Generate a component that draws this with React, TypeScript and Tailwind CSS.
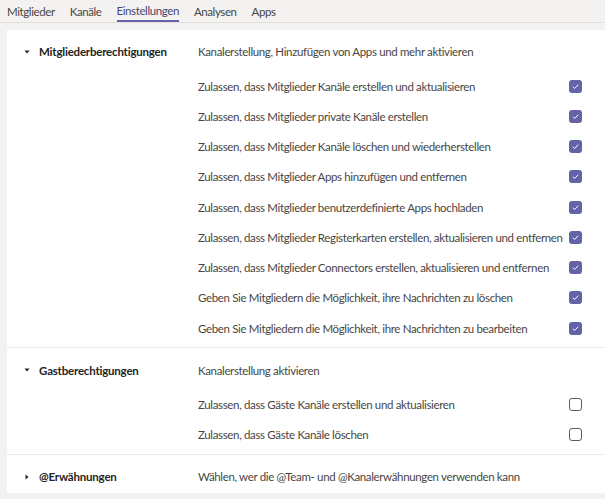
import React from "react";

interface Section {
  title: string;
  desc: string;
  open: boolean;
  rows: { label: string; checked: boolean }[];
}

const sections: Section[] = [
  {
    title: "Mitgliederberechtigungen",
    desc: "Kanalerstellung, Hinzufügen von Apps und mehr aktivieren",
    open: true,
    rows: [
      { label: "Zulassen, dass Mitglieder Kanäle erstellen und aktualisieren", checked: true },
      { label: "Zulassen, dass Mitglieder private Kanäle erstellen", checked: true },
      { label: "Zulassen, dass Mitglieder Kanäle löschen und wiederherstellen", checked: true },
      { label: "Zulassen, dass Mitglieder Apps hinzufügen und entfernen", checked: true },
      { label: "Zulassen, dass Mitglieder benutzerdefinierte Apps hochladen", checked: true },
      { label: "Zulassen, dass Mitglieder Registerkarten erstellen, aktualisieren und entfernen", checked: true },
      { label: "Zulassen, dass Mitglieder Connectors erstellen, aktualisieren und entfernen", checked: true },
      { label: "Geben Sie Mitgliedern die Möglichkeit, ihre Nachrichten zu löschen", checked: true },
      { label: "Geben Sie Mitgliedern die Möglichkeit, ihre Nachrichten zu bearbeiten", checked: true },
    ],
  },
  {
    title: "Gastberechtigungen",
    desc: "Kanalerstellung aktivieren",
    open: true,
    rows: [
      { label: "Zulassen, dass Gäste Kanäle erstellen und aktualisieren", checked: false },
      { label: "Zulassen, dass Gäste Kanäle löschen", checked: false },
    ],
  },
  {
    title: "@Erwähnungen",
    desc: "Wählen, wer die @Team- und @Kanalerwähnungen verwenden kann",
    open: false,
    rows: [],
  },
];

const tabs = ["Mitglieder", "Kanäle", "Einstellungen", "Analysen", "Apps"];

function Checkbox({ checked }: { checked: boolean }) {
  if (checked)
    return (
      <div className="w-[13px] h-[13px] shrink-0 rounded-[3px] bg-[#6264a7] flex items-center justify-center">
        <svg width="9" height="9" viewBox="0 0 10 10">
          <path d="M2 5.2 L4.1 7.2 L8 3" fill="none" stroke="#fff" strokeWidth="1.1" />
        </svg>
      </div>
    );
  return <div className="w-[13px] h-[13px] shrink-0 rounded-[3px] border border-[#605e5c] bg-white" />;
}

function Chevron({ open }: { open: boolean }) {
  return (
    <svg width="6" height="6" viewBox="0 0 6 6" className="mr-[9px] shrink-0">
      {open ? <path d="M0.5 1.5 L5.5 1.5 L3 4.5 Z" fill="#252423" /> : <path d="M1.5 0.5 L4.5 3 L1.5 5.5 Z" fill="#252423" />}
    </svg>
  );
}

export default function App() {
  return (
    <div className="w-[605px] h-[499px] bg-[#f3f2f1] overflow-hidden text-[11.5px] tracking-[-0.35px] text-[#252423] whitespace-nowrap" style={{ fontFamily: "Lato, sans-serif" }}>
      <div className="flex items-end h-[23px] border-b border-[#e1dfdd] pl-[7px] gap-[15px] tracking-[-0.4px]">
        {tabs.map((t) => (
          <div key={t} className={`h-full flex items-center pt-[2px] ${t === "Einstellungen" ? "text-[#464775] border-b-2 border-[#6264a7]" : "text-[#484644]"}`}>
            {t}
          </div>
        ))}
      </div>
      <div className="ml-[7px] mt-[7px] bg-white">
        {sections.map((s, i) => (
          <div key={s.title} className={`flex pt-3 ${i > 0 ? "border-t border-[#edebe9]" : ""} ${s.open ? "pb-[4px]" : "pb-[6px]"}`}>
            <div className="w-[191px] shrink-0 h-[20px] flex items-center pl-[17px] font-bold tracking-[-0.2px] text-[#252423]">
              <Chevron open={s.open} />
              {s.title}
            </div>
            <div className="flex-1 min-w-0">
              <div className="h-[20px] flex items-center text-[#484644]">{s.desc}</div>
              {s.rows.length > 0 && (
                <div className="mt-[9px]">
                  {s.rows.map((r) => (
                    <div key={r.label} className="h-[30.25px] flex items-center justify-between pr-[23px] text-[#484644]">
                      <span>{r.label}</span>
                      <Checkbox checked={r.checked} />
                    </div>
                  ))}
                </div>
              )}
            </div>
          </div>
        ))}
      </div>
    </div>
  );
}
